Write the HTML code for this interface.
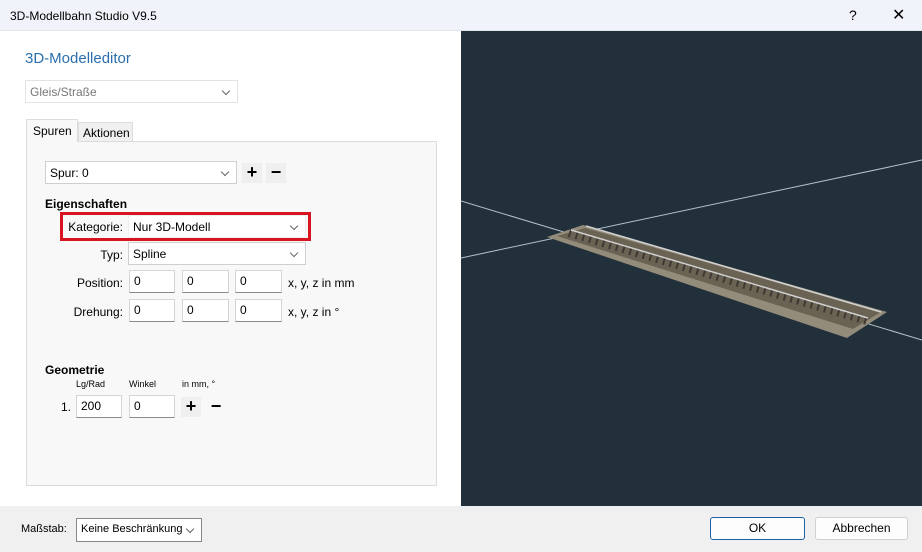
<!DOCTYPE html>
<html><head><meta charset="utf-8"><style>
*{box-sizing:border-box;margin:0;padding:0}
body{width:922px;height:552px;overflow:hidden;background:#fff;font-family:"Liberation Sans",sans-serif;font-size:12px;color:#000;position:relative}
.a{position:absolute}
.title{left:0;top:0;width:922px;height:31px;background:#f0f3f9;border-bottom:1px solid #e2e5ea}
.in{position:absolute;background:#fff;border:1px solid #d5d5d5;border-bottom:1px solid #8a8a8a;height:23px;padding:3px 4px;font-size:12px}
.cb{position:absolute;background:#fff;border:1px solid #cfcfcf;height:23px;padding:4px 4px;font-size:12px}
.cb:after{content:"";position:absolute;right:8px;top:7px;width:5px;height:5px;border-right:1px solid #666;border-bottom:1px solid #666;transform:rotate(45deg)}
.btn{position:absolute;background:#efefef;width:20px;height:20px;text-align:center;font-size:18px;line-height:19px;font-weight:bold}
.lbl{position:absolute;text-align:right;font-size:12px}
</style></head><body>
<div class="a title"></div>
<div class="a" style="left:10px;top:9px;font-size:12px">3D-Modellbahn Studio V9.5</div>
<div class="a" style="left:849px;top:7px;font-size:14px">?</div>
<div class="a" style="left:892px;top:5px;font-size:16px">✕</div>
<div class="a" style="left:25px;top:50px;font-size:15px;color:#2a6fad">3D-Modelleditor</div>
<div class="cb" style="left:25px;top:80px;width:213px;height:23px;color:#777;border-color:#e3e3e3">Gleis/Straße</div>
<div class="a" style="left:26px;top:141px;width:411px;height:345px;background:#f8f8f8;border:1px solid #dcdcdc"></div>
<div class="a" style="left:78px;top:122px;width:55px;height:20px;background:#f0f0f0;border:1px solid #dcdcdc;padding:3px 4px">Aktionen</div>
<div class="a" style="left:26px;top:119px;width:52px;height:23px;background:#f8f8f8;border:1px solid #dcdcdc;border-bottom:none;padding:4px 6px">Spuren</div>
<div class="cb" style="left:45px;top:161px;width:192px">Spur: 0</div>
<div class="btn" style="left:242px;top:163px">+</div><div class="btn" style="left:266px;top:163px">−</div>
<div class="a" style="left:45px;top:197px;font-weight:bold">Eigenschaften</div>
<div class="a" style="left:60px;top:212px;width:251px;height:29px;border:3px solid #d7141f"></div>
<div class="lbl" style="left:60px;top:220px;width:63px">Kategorie:</div>
<div class="cb" style="left:128px;top:215px;width:178px;border-color:#eee">Nur 3D-Modell</div>
<div class="lbl" style="left:60px;top:248px;width:63px">Typ:</div>
<div class="cb" style="left:128px;top:242px;width:178px">Spline</div>
<div class="lbl" style="left:50px;top:276px;width:73px">Position:</div>
<div class="in" style="left:129px;top:270px;width:46px">0</div><div class="in" style="left:182px;top:270px;width:47px">0</div><div class="in" style="left:235px;top:270px;width:47px">0</div>
<div class="a" style="left:288px;top:276px">x, y, z in mm</div>
<div class="lbl" style="left:50px;top:305px;width:73px">Drehung:</div>
<div class="in" style="left:129px;top:299px;width:46px">0</div><div class="in" style="left:182px;top:299px;width:47px">0</div><div class="in" style="left:235px;top:299px;width:47px">0</div>
<div class="a" style="left:288px;top:305px">x, y, z in °</div>
<div class="a" style="left:45px;top:363px;font-weight:bold">Geometrie</div>
<div class="a" style="left:76px;top:379px;font-size:9px">Lg/Rad</div>
<div class="a" style="left:129px;top:379px;font-size:9px">Winkel</div>
<div class="a" style="left:182px;top:379px;font-size:9px">in mm, °</div>
<div class="a" style="left:61px;top:400px">1.</div>
<div class="in" style="left:76px;top:395px;width:46px">200</div><div class="in" style="left:129px;top:395px;width:46px">0</div>
<div class="btn" style="left:181px;top:397px">+</div><div class="a" style="left:206px;top:397px;width:20px;height:20px;text-align:center;font-size:18px;line-height:19px;font-weight:bold">−</div>
<svg class="a" style="left:461px;top:31px" width="461" height="475">
<rect width="461" height="475" fill="#22303b"/>
<line x1="0" y1="170" x2="461" y2="309" stroke="#b8c0c6" stroke-width="1"/>
<line x1="0" y1="227" x2="461" y2="129" stroke="#b8c0c6" stroke-width="1"/>
<polygon points="86,206 122,194 426,281 386,307" fill="#948c7a"/>
<polygon points="96,205 124,197 420,281 392,298" fill="#6a6252"/>
<line x1="108" y1="202" x2="406" y2="290" stroke="#3e3a33" stroke-width="8" stroke-dasharray="2,5"/>
<line x1="110" y1="199" x2="407" y2="287" stroke="#d0d0d0" stroke-width="1.5"/>
<line x1="125" y1="195" x2="420" y2="281" stroke="#d0d0d0" stroke-width="1.5"/>
</svg>
<div class="a" style="left:0;top:506px;width:922px;height:46px;background:#f0f0f0"></div>
<div class="a" style="left:21px;top:523px;font-size:11px">Maßstab:</div>
<div class="cb" style="left:76px;top:518px;width:126px;height:24px;border-color:#888;font-size:11px;overflow:hidden;white-space:nowrap">Keine Beschränkung</div>
<div class="a" style="left:710px;top:517px;width:95px;height:23px;background:#fdfdfd;border:1px solid #1f5fa8;border-radius:3px;text-align:center;line-height:21px">OK</div>
<div class="a" style="left:815px;top:517px;width:93px;height:23px;background:#fdfdfd;border:1px solid #d0d0d0;border-radius:3px;text-align:center;line-height:21px">Abbrechen</div>
</body></html>
